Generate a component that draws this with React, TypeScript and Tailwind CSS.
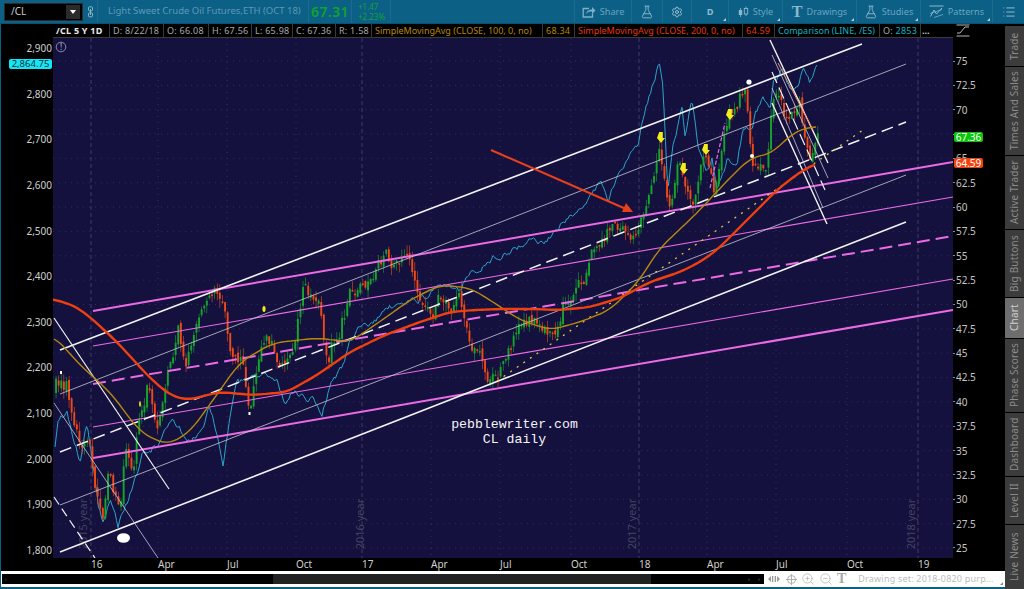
import { FlaskConical, List, Settings, ZoomIn, ZoomOut } from "lucide-react";

type Pt = [number, number];

const GRID_X = [91, 158, 227, 296, 362, 431, 500, 571, 639, 707, 776, 847, 918];
const YEAR_X = [91, 362, 639, 918];

const TICKS = [
  { label: "16", w: "w-[67px]" },
  { label: "Apr", w: "w-[69px]" },
  { label: "Jul", w: "w-[69px]" },
  { label: "Oct", w: "w-[66px]" },
  { label: "17", w: "w-[69px]" },
  { label: "Apr", w: "w-[69px]" },
  { label: "Jul", w: "w-[71px]" },
  { label: "Oct", w: "w-[68px]" },
  { label: "18", w: "w-[68px]" },
  { label: "Apr", w: "w-[69px]" },
  { label: "Jul", w: "w-[71px]" },
  { label: "Oct", w: "w-[71px]" },
  { label: "19", w: "w-[30px]" },
];

const LEFT_AXIS = ["2,900", "2,800", "2,700", "2,600", "2,500", "2,400", "2,300", "2,200", "2,100", "2,000", "1,900", "1,800"];
// 67.5 sits behind the green last-price badge, so its text is left out
const RIGHT_AXIS = ["75", "72.5", "70", "", "65", "62.5", "60", "57.5", "55", "52.5", "50", "47.5", "45", "42.5", "40", "37.5", "35", "32.5", "30", "27.5", "25"];

const PRICE: Pt[] = [
  [55, 390], [62, 375], [68, 385], [72, 410], [80, 440], [87, 425], [90, 430], [95, 475], [100, 505], [103, 520], [108, 470], [115, 500], [120, 530], [125, 470], [132, 475], [140, 420], [147, 385], [157, 430], [167, 390], [178, 340], [187, 365], [197, 315], [208, 300], [220, 305], [230, 345], [242, 355], [250, 405], [263, 325], [273, 345], [283, 370], [293, 345], [303, 295], [317, 305], [328, 360], [340, 320], [350, 290], [365, 270], [385, 265], [405, 262], [425, 320], [440, 305], [460, 305], [470, 330], [490, 380], [510, 345], [530, 320], [545, 340], [565, 300], [590, 260], [610, 225], [625, 235], [640, 215], [650, 195], [660, 150], [670, 205], [680, 165], [695, 195], [705, 160], [715, 190], [728, 135], [745, 90], [752, 160], [765, 165], [775, 85], [790, 130], [800, 110], [810, 160], [818, 140],
];

const COMPARE: Pt[] = [
  [55, 450], [58, 427], [67, 415], [73, 433], [80, 460], [87, 423], [93, 467], [98, 507], [103, 525], [110, 500], [118, 530], [132, 490], [143, 455], [157, 442], [172, 415], [183, 435], [197, 437], [210, 407], [215, 427], [223, 465], [230, 417], [237, 388], [257, 375], [277, 378], [285, 405], [293, 390], [312, 397], [322, 420], [330, 385], [343, 365], [350, 340], [370, 322], [385, 312], [405, 300], [430, 295], [445, 285], [460, 290], [470, 270], [490, 260], [505, 250], [525, 245], [545, 240], [560, 225], [575, 215], [590, 190], [600, 183], [608, 197], [617, 175], [627, 157], [638, 150], [642, 125], [650, 95], [655, 80], [659, 60], [663, 85], [667, 170], [668, 185], [672, 145], [682, 105], [685, 130], [692, 100], [698, 150], [707, 170], [712, 160], [717, 190], [727, 160], [737, 165], [743, 128], [752, 128], [755, 113], [763, 98], [770, 113], [773, 80], [782, 72], [790, 90], [797, 87], [803, 70], [810, 82], [817, 65],
];

const MA_200: Pt[] = [
  [53, 299], [75, 306], [90, 317], [117, 342], [150, 378], [170, 395], [187, 400], [220, 392], [253, 395], [287, 392], [317, 375], [350, 352], [385, 335], [420, 322], [450, 312], [475, 310], [500, 309], [530, 309], [560, 310], [590, 307], [620, 298], [650, 282], [680, 272], [700, 262], [717, 250], [745, 222], [777, 190], [800, 172], [817, 163],
];

const MA_100: Pt[] = [
  [54, 336], [80, 365], [110, 392], [140, 432], [167, 445], [190, 432], [213, 400], [240, 362], [273, 343], [317, 338], [350, 342], [385, 318], [410, 300], [440, 285], [470, 288], [490, 300], [520, 320], [550, 330], [580, 322], [610, 310], [640, 280], [658, 250], [700, 210], [723, 185], [750, 158], [773, 153], [790, 135], [807, 127], [817, 127],
];

const WHITE_LINES: { a: Pt; b: Pt; w: number; color: string; dash?: string }[] = [
  { a: [60, 350], b: [862, 44], w: 1.6, color: "#f2f2f2" },
  { a: [60, 394], b: [906, 64], w: 0.8, color: "#c8c8d8" },
  { a: [60, 452], b: [906, 122], w: 1.5, color: "#f2f2f2", dash: "12 6" },
  { a: [60, 505], b: [906, 175], w: 0.8, color: "#c8c8d8" },
  { a: [60, 552], b: [906, 222], w: 1.6, color: "#f2f2f2" },
  { a: [54, 318], b: [169, 489], w: 1.2, color: "#f2f2f2" },
  { a: [54, 403], b: [158, 558], w: 0.8, color: "#c8c8d8" },
  { a: [54, 497], b: [95, 558], w: 1.2, color: "#f2f2f2", dash: "9 5" },
  { a: [770, 40], b: [828, 163], w: 1.4, color: "#f2f2f2" },
  { a: [772, 55], b: [828, 178], w: 0.8, color: "#c8c8d8" },
  { a: [772, 72], b: [825, 190], w: 1.2, color: "#f2f2f2", dash: "12 5" },
  { a: [772, 88], b: [823, 208], w: 0.8, color: "#c8c8d8" },
  { a: [772, 103], b: [827, 224], w: 1.4, color: "#f2f2f2" },
];

const PINK_LINES: { a: Pt; b: Pt; w: number; dash?: string }[] = [
  { a: [93, 311], b: [953, 162], w: 2 },
  { a: [93, 346], b: [953, 197], w: 1.1 },
  { a: [93, 384], b: [953, 236], w: 2, dash: "13 6" },
  { a: [93, 427], b: [953, 279], w: 1.1 },
  { a: [93, 458], b: [953, 310], w: 2 },
  { a: [710, 188], b: [725, 123], w: 1.2, dash: "4 2" },
];

const ARROWS: Pt[] = [[661, 138], [684, 169], [706, 150], [730, 115]];

const TABS = [
  { label: "Trade", h: "h-[40px]" },
  { label: "Times And Sales", h: "h-[88px]" },
  { label: "Active Trader", h: "h-[73px]" },
  { label: "Big Buttons", h: "h-[67px]" },
  { label: "Chart", h: "h-[40px]", active: true },
  { label: "Phase Scores", h: "h-[73px]" },
  { label: "Dashboard", h: "h-[63px]" },
  { label: "Level II", h: "h-[47px]" },
  { label: "Live News", h: "h-[64px]" },
];

const INFO = [
  { text: "D: 8/22/18", w: "w-[54px]", color: "text-[#a8a8a8] tracking-[0.25px]" },
  { text: "O: 66.08", w: "w-[45px]", color: "text-[#a8a8a8] tracking-[0.25px]" },
  { text: "H: 67.56", w: "w-[43px]", color: "text-[#a8a8a8] tracking-[0.25px]" },
  { text: "L: 65.98", w: "w-[41px]", color: "text-[#a8a8a8] tracking-[0.25px]" },
  { text: "C: 67.36", w: "w-[43px]", color: "text-[#a8a8a8] tracking-[0.25px]" },
  { text: "R: 1.58", w: "w-[36px]", color: "text-[#a8a8a8] tracking-[0.25px]" },
  { text: "SimpleMovingAvg (CLOSE, 100, 0, no)", w: "w-[171px]", color: "text-[#b8860b]" },
  { text: "68.34", w: "w-[32px]", color: "text-[#b8860b] tracking-[0.25px]" },
  { text: "SimpleMovingAvg (CLOSE, 200, 0, no)", w: "w-[168px]", color: "text-[#e8330f]" },
  { text: "64.59", w: "w-[32px]", color: "text-[#e8330f] tracking-[0.25px]" },
  { text: "Comparison (LINE, /ES)", w: "w-[105px]", color: "text-[#09b4c6]" },
];

function lerp(path: Pt[], x: number) {
  for (let i = 1; i < path.length; i++) {
    if (x <= path[i][0]) {
      const [x0, y0] = path[i - 1];
      const [x1, y1] = path[i];
      return y0 + ((y1 - y0) * (x - x0)) / (x1 - x0 || 1);
    }
  }
  return path[path.length - 1][1];
}

function makeRandom(seed: number) {
  let s = seed;
  return () => {
    s = (s * 16807) % 2147483647;
    return s / 2147483647;
  };
}

function makeCandles() {
  const rnd = makeRandom(4242);
  const out = [];
  let wobble = 0;
  let prev = lerp(PRICE, 55);
  for (let x = 56; x <= 818; x += 2.6) {
    wobble = wobble * 0.72 + (rnd() - 0.5) * 20;
    const close = lerp(PRICE, x) + wobble;
    const open = prev + (rnd() - 0.5) * 6;
    prev = close;
    const top = Math.min(open, close);
    const bottom = Math.max(open, close);
    out.push({
      x,
      top,
      h: Math.max(bottom - top, 1.5),
      wickTop: top - rnd() * 9,
      wickBottom: bottom + rnd() * 9,
      up: close < open,
    });
  }
  return out;
}

function makeCompareLine() {
  const rnd = makeRandom(77);
  const pts: string[] = [];
  let wobble = 0;
  for (let x = 55; x <= 817; x += 1.5) {
    wobble = wobble * 0.8 + (rnd() - 0.5) * 6;
    const y = lerp(COMPARE, x) + wobble;
    pts.push(`${x},${y.toFixed(1)}`);
  }
  return pts.join(" ");
}

function smooth(path: Pt[], span: number) {
  const end = path[path.length - 1][0];
  const pts: string[] = [];
  for (let x = path[0][0]; x <= end; x += 3) {
    let sum = 0;
    let n = 0;
    for (let d = -span; d <= span; d += 2) {
      const q = Math.min(end, Math.max(path[0][0], x + d));
      sum += lerp(path, q);
      n++;
    }
    pts.push(`${x},${(sum / n).toFixed(1)}`);
  }
  return pts.join(" ");
}

const CANDLES = makeCandles();
const COMPARE_LINE = makeCompareLine();

function Chart() {
  return (
    <svg viewBox="53 38 900 520" className="h-[520px] w-[900px] bg-[#14113f]">
      {RIGHT_AXIS.map((_, i) => (
        <line key={i} x1="53" x2="953" y1={61 + i * 24.35} y2={61 + i * 24.35} stroke="#3a3a60" strokeWidth="0.7" strokeDasharray="1 5" />
      ))}
      {GRID_X.map((x) => (
        <line key={x} x1={x} x2={x} y1="38" y2="558" stroke={YEAR_X.includes(x) ? "#4a4a6a" : "#3a3a60"} strokeWidth="0.8" strokeDasharray={YEAR_X.includes(x) ? "4 3" : "1 5"} />
      ))}
      {[
        { x: 87, t: "2015 year" },
        { x: 364, t: "2016 year" },
        { x: 636, t: "2017 year" },
        { x: 915, t: "2018 year" },
      ].map((y) => (
        <text key={y.t} transform={`translate(${y.x} 524) rotate(-90)`} textAnchor="middle" fontFamily="Noto Sans, sans-serif" fontSize="11" fill="#44435f">
          {y.t}
        </text>
      ))}
      <circle cx="61" cy="47" r="4.8" fill="none" stroke="#a8a8c0" strokeWidth="0.8" />
      <text x="61" y="50" textAnchor="middle" fontFamily="Noto Sans, sans-serif" fontSize="8" fill="#c0c0d0">!</text>

      <polyline points={COMPARE_LINE} fill="none" stroke="#2ba5c9" strokeWidth="1" />
      {CANDLES.map((c) => (
        <g key={c.x} fill={c.up ? "#14a52a" : "#ee4a17"}>
          <rect x={c.x - 0.25} y={c.wickTop} width="0.6" height={c.wickBottom - c.wickTop} />
          <rect x={c.x - 0.9} y={c.top} width="1.9" height={c.h} />
        </g>
      ))}

      {PINK_LINES.map((l, i) => (
        <line key={i} x1={l.a[0]} y1={l.a[1]} x2={l.b[0]} y2={l.b[1]} stroke="#ec6be4" strokeWidth={l.w} strokeDasharray={l.dash} />
      ))}
      {WHITE_LINES.map((l, i) => (
        <line key={i} x1={l.a[0]} y1={l.a[1]} x2={l.b[0]} y2={l.b[1]} stroke={l.color} strokeWidth={l.w} strokeDasharray={l.dash} />
      ))}
      <line x1="778" y1="63" x2="813" y2="130" stroke="#f08a68" strokeWidth="1" />
      <line x1="497" y1="381" x2="863" y2="130" stroke="#e0c93a" strokeWidth="1.3" strokeDasharray="2 6" />

      <polyline points={smooth(MA_100, 10)} fill="none" stroke="#b58a0e" strokeWidth="1.4" />
      <polyline points={smooth(MA_200, 8)} fill="none" stroke="#f0400f" strokeWidth="2.4" strokeLinejoin="round" />

      <line x1="491" y1="150" x2="626" y2="209" stroke="#e8401a" strokeWidth="2" />
      <polygon points="633,212 622,212 626,203" fill="#e8401a" />

      {ARROWS.map(([x, y]) => (
        <polygon key={x} points={`${x - 1.8},${y - 6} ${x + 1.8},${y - 6} ${x + 1.8},${y} ${x + 4},${y} ${x},${y + 5} ${x - 4},${y}`} fill="#f5ec1d" />
      ))}
      <circle cx="749" cy="82" r="2.6" fill="#fff" />
      <circle cx="752" cy="156" r="2" fill="#fff" />
      <ellipse cx="123.5" cy="538" rx="6.5" ry="4.8" fill="#fff" />
      <rect x="60" y="371" width="2" height="3" fill="#fff" />
      <rect x="248.5" y="412" width="2" height="3" fill="#fff" />
      <ellipse cx="264" cy="309" rx="1.6" ry="3" fill="#f5ec1d" />
      <ellipse cx="140" cy="404" rx="0.9" ry="3" fill="#f5ec1d" />

      <text x="514.5" y="428" textAnchor="middle" fontFamily="Liberation Mono, monospace" fontSize="13.2" fill="#f4f4f4">pebblewriter.com</text>
      <text x="514.5" y="443" textAnchor="middle" fontFamily="Liberation Mono, monospace" fontSize="13.2" fill="#f4f4f4">CL daily</text>
    </svg>
  );
}

function Corner() {
  return <span className="absolute right-[2px] bottom-[2px] h-0 w-0 border-b-[3px] border-l-[3px] border-b-[#b8d0dc] border-l-transparent" />;
}

function ToolItem({ w, children, corner = true }: { w: string; children: React.ReactNode; corner?: boolean }) {
  return (
    <div className={`relative flex h-full shrink-0 items-center justify-center gap-[4px] border-r border-[#1b6b90] text-[9.2px] text-[#69a5c0] ${w}`}>
      {children}
      {corner && <Corner />}
    </div>
  );
}

function Toolbar() {
  return (
    <div className="flex h-6 shrink-0 items-center border-b border-[#0a4f70] bg-[#0c5f85]" style={{ fontFamily: "'Noto Sans', sans-serif" }}>
      <div className="relative flex h-full w-[98px] shrink-0 items-center border-r border-[#1b6b90] pl-1">
        <div className="flex h-[18px] w-[79px] items-center justify-between border border-[#2a2a2a] bg-black pl-[6px] pr-[2px] text-[10px] text-[#c8c8c8]">
          /CL
          <span className="flex h-[14px] w-[14px] items-center justify-center bg-[#2b2b2b]">
            <span className="h-0 w-0 border-x-[3.5px] border-t-[4px] border-x-transparent border-t-white" />
          </span>
        </div>
        <svg viewBox="0 0 8 12" className="ml-[4px] h-3 w-2" fill="none" stroke="#8fb4c6" strokeWidth="1">
          <rect x="1.5" y="0.8" width="4" height="4" rx="1" />
          <rect x="1.5" y="6.8" width="4" height="4" rx="1" />
          <line x1="3.5" y1="3" x2="3.5" y2="9" />
        </svg>
      </div>
      <div className="flex h-full w-[211px] shrink-0 items-center border-r border-[#1b6b90] pl-[10px] text-[9.5px] whitespace-nowrap text-[#5d9ab6]">
        Light Sweet Crude Oil Futures,ETH (OCT 18)
      </div>
      <div className="flex h-full w-[43px] shrink-0 items-center justify-center border-r border-[#1b6b90] text-[14px] font-semibold tracking-[0.4px] text-[#0ea52c]">
        67.31
      </div>
      <div className="flex h-full w-[39px] shrink-0 flex-col justify-center border-r border-[#1b6b90] pl-[6px] text-[8px] leading-[10px] text-[#12a33a]">
        <span>+1.47</span>
        <span>+2.23%</span>
      </div>
      <div className="h-full w-[184px] shrink-0 border-r border-[#1b6b90]" />
      <ToolItem w="w-[57px]" corner={false}>
        <svg viewBox="0 0 14 12" className="h-3 w-[14px]" fill="none" stroke="#7fb0c6" strokeWidth="1.3">
          <path d="M7 2.5H1.2v8.5h9.3V7.5" />
          <path d="M4 8c.5-3 3-4.5 6-4.5V1l3.5 3.5L10 8V5.5C7.5 5.5 5.5 6 4 8z" fill="#7fb0c6" stroke="none" />
        </svg>
        Share
      </ToolItem>
      <ToolItem w="w-[31px]" corner={false}>
        <FlaskConical size={14} strokeWidth={1.6} color="#8db8cc" />
      </ToolItem>
      <ToolItem w="w-[29px]" corner={false}>
        <Settings size={12} strokeWidth={2} color="#9cc0d0" />
      </ToolItem>
      <ToolItem w="w-[37px]">
        <span className="font-bold text-[#8db8cc]">D</span>
      </ToolItem>
      <ToolItem w="w-[54px]">
        <svg viewBox="0 0 11 12" className="h-3 w-[11px]" fill="#8db8cc" stroke="#8db8cc">
          <line x1="2.5" y1="2" x2="2.5" y2="11" strokeWidth="0.8" />
          <rect x="0.8" y="4" width="3.4" height="5" stroke="none" />
          <line x1="8" y1="0.5" x2="8" y2="10" strokeWidth="0.8" />
          <rect x="6.3" y="2.5" width="3.4" height="5.5" fill="#0c5f85" strokeWidth="0.9" />
        </svg>
        Style
      </ToolItem>
      <ToolItem w="w-[74px]">
        <span className="text-[16px] leading-none font-bold text-[#8db8cc]" style={{ fontFamily: "'Liberation Serif', serif" }}>T</span>
        Drawings
      </ToolItem>
      <ToolItem w="w-[64px]">
        <FlaskConical size={14} strokeWidth={1.6} color="#8db8cc" />
        Studies
      </ToolItem>
      <ToolItem w="w-[72px]">
        <svg viewBox="0 0 15 13" className="h-[13px] w-[15px]" fill="none" stroke="#8db8cc" strokeWidth="1">
          <line x1="0.5" y1="1" x2="14.5" y2="1" />
          <path d="M1.5 11.5 5 5l2.5 4L13 3" />
          <path d="M1 8.5l12-4M5 12.5l9-3" strokeWidth="0.7" />
        </svg>
        Patterns
      </ToolItem>
      <div className="flex flex-1 justify-center">
        <List size={14} strokeWidth={1.6} color="#9cc0d0" />
      </div>
    </div>
  );
}

function InfoBar() {
  return (
    <div className="flex h-[14px] shrink-0 bg-black text-[9px] leading-[13px] whitespace-nowrap" style={{ fontFamily: "'Noto Sans', sans-serif" }}>
      <div className="w-[52px] shrink-0" />
      <div className="w-[57px] shrink-0 border-r border-b border-[#3a3a3a] pl-[3px] font-bold tracking-[0.25px] text-[#e8e8e8]">/CL 5 Y 1D</div>
      {INFO.map((c) => (
        <div key={c.text} className={`shrink-0 overflow-hidden border-r border-b border-[#3a3a3a] pl-[3px] ${c.w} ${c.color}`}>
          {c.text}
        </div>
      ))}
      <div className="w-[41px] shrink-0 border-r border-b border-[#3a3a3a] pl-[3px] tracking-[0.25px] text-[#a8a8a8]">
        O: <span className="text-[#09b4c6]">2853</span>
      </div>
      <div className="w-[32px] shrink-0 border-b border-[#3a3a3a] pl-[1px] font-bold text-[#c8c8c8]">...</div>
      <div className="flex-1 pl-[3px]">
        <svg viewBox="0 0 14 13" className="h-[13px] w-[14px]" fill="none" stroke="#b8b8b8" strokeWidth="1">
          <line x1="0.5" y1="1" x2="13.5" y2="1" />
          <line x1="0.5" y1="12" x2="13.5" y2="12" />
          <path d="M1 9h3l5-6h4" />
        </svg>
      </div>
    </div>
  );
}

function LeftAxis() {
  return (
    <div className="relative flex h-full w-[52px] shrink-0 flex-col justify-between bg-black pt-[4px] pb-[2px] text-right text-[10px] leading-[12px] text-[#cfcfcf]">
      {LEFT_AXIS.map((t) => (
        <span key={t} className="pr-[1px]">{t}</span>
      ))}
      <span className="absolute top-[21px] left-[8px] h-[10px] w-[43px] rounded-[2px] bg-[#14e6f5] text-center text-[9.5px] leading-[10px] text-[#10303a]">2,864.75</span>
    </div>
  );
}

function RightAxis() {
  return (
    <div className="relative flex h-full w-[52px] shrink-0 flex-col justify-between bg-black pt-[17px] pb-[4px] text-[10px] leading-[12px] text-[#c4c4c4]">
      {RIGHT_AXIS.map((t, i) => (
        <div key={i} className="flex h-3 items-center gap-[1px]">
          <span className="h-px w-[2px] bg-[#8a8a8a]" />
          {t}
        </div>
      ))}
      <span className="absolute top-[94px] left-[1px] h-[10px] w-[29px] rounded-[2px] bg-[#0cc40c] text-center text-[10px] leading-[10px] text-white">67.36</span>
      <span className="absolute top-[120px] left-[1px] h-[10px] w-[29px] rounded-[2px] bg-[#f2420f] text-center text-[10px] leading-[10px] text-white">64.59</span>
    </div>
  );
}

function TimeAxis() {
  return (
    <div className="flex h-[13px] shrink-0 bg-black pl-[90px] text-[10px] leading-[13px] text-[#cfcfcf]">
      {TICKS.map((t, i) => (
        <span key={i} className={`shrink-0 ${t.w}`}>{t.label}</span>
      ))}
    </div>
  );
}

function BottomBar() {
  return (
    <div className="flex h-[16px] shrink-0 items-center bg-white pl-[1px]" style={{ fontFamily: "'Noto Sans', sans-serif" }}>
      <div className="flex h-[10px] w-[762px] shrink-0 items-center bg-black">
        <span className="ml-[3px] w-[268px] text-[6px] leading-none text-[#666]">‹</span>
        <div className="h-full w-[378px] bg-[#222]" />
        <div className="ml-[97px] flex gap-[8px] text-[6px] leading-none text-[#888]">
          <span>‹</span>
          <span>›</span>
        </div>
      </div>
      <div className="ml-[4px] flex items-center gap-[4px] text-[#9a9a9a]">
        <svg viewBox="0 0 12 8" className="h-2 w-3" fill="#999">
          <path d="M0 4l3-3v6zM12 4l-3-3v6z" />
          <rect x="4" y="1" width="1.3" height="6" />
          <rect x="6.7" y="1" width="1.3" height="6" />
        </svg>
        <svg viewBox="0 0 11 11" className="ml-[2px] h-[11px] w-[11px]" fill="none" stroke="#a8a8a8" strokeWidth="0.9">
          <circle cx="5.5" cy="5.5" r="4" />
          <path d="M5.5 0v11M0 5.5h11" />
        </svg>
        <ZoomIn size={14} strokeWidth={1.1} color="#a8a8a8" />
        <ZoomOut size={14} strokeWidth={1.1} color="#a8a8a8" />
        <span className="text-[14px] leading-none font-bold text-[#a8a8a8]" style={{ fontFamily: "'Liberation Serif', serif" }}>T</span>
      </div>
      <div className="relative ml-[12px] flex-1 text-[9px] tracking-[0.2px] whitespace-nowrap text-[#bdbdbd]">
        Drawing set: 2018-0820 purp...
        <span className="absolute right-[2px] bottom-[1px] h-0 w-0 border-b-[3px] border-l-[3px] border-b-[#888] border-l-transparent" />
      </div>
    </div>
  );
}

function SideTabs() {
  return (
    <div className="flex w-[19px] shrink-0 flex-col gap-px bg-black pt-[2px] pb-[2px]" style={{ fontFamily: "'Noto Sans', sans-serif" }}>
      {TABS.map((t) => (
        <div
          key={t.label}
          className={`flex w-full shrink-0 rotate-180 items-center justify-center text-[10px] tracking-[0.2px] whitespace-nowrap [writing-mode:vertical-rl] ${t.h} ${t.active ? "bg-[#6e6e6e] text-[#d0d0d0]" : "bg-[#3c3c3c] text-[#8c8c8c]"}`}
        >
          {t.label}
        </div>
      ))}
    </div>
  );
}

export default function App() {
  return (
    <div className="flex h-[589px] w-[1024px] flex-col overflow-hidden bg-[#0c5f85]">
      <Toolbar />
      <div className="flex flex-1 pl-px">
        <div className="flex w-[1004px] shrink-0 flex-col" style={{ fontFamily: "'Noto Sans', sans-serif" }}>
          <InfoBar />
          <div className="flex h-[520px] shrink-0">
            <LeftAxis />
            <Chart />
            <RightAxis />
          </div>
          <TimeAxis />
          <BottomBar />
        </div>
        <SideTabs />
      </div>
    </div>
  );
}
